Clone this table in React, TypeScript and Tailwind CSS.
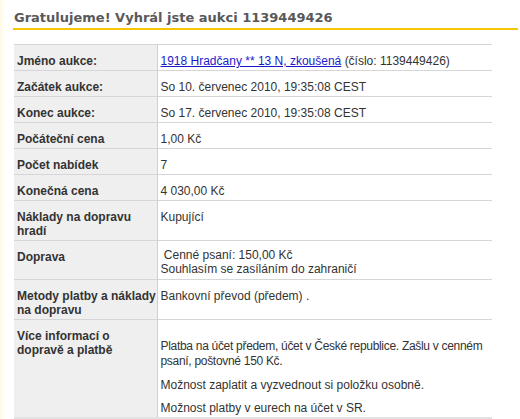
import React from "react";

const labelCls =
  "w-[143px] bg-[#efefef] border-t border-[#d6d6d6] border-r border-r-[#cfcfcf] align-top pl-[3px] pr-[2px] pt-[9px] pb-[2px] font-bold text-[#333] leading-[14px] whitespace-nowrap";
const valCls =
  "border-t border-[#d6d6d6] align-top pl-[3px] pr-[2px] pt-[9px] pb-[2px] text-[#333] leading-[14px] whitespace-nowrap";

function Row({ label, children, valExtra = "" }: { label: React.ReactNode; children: React.ReactNode; valExtra?: string }) {
  return (
    <tr>
      <td className={labelCls}>{label}</td>
      <td className={`${valCls} ${valExtra}`}>{children}</td>
    </tr>
  );
}

export default function App() {
  return (
    <div
      className="w-[520px] h-[419px] bg-white flex overflow-hidden"
      style={{ fontFamily: '"Liberation Sans", Arial, sans-serif' }}
    >
      <div className="w-[3px] bg-[#fffbea] shrink-0" />
      <div className="flex-1 pl-[10px] pt-[10px]">
        <h1
          className="text-[13px] font-bold text-[#595959] leading-[16px] pl-[1px] pb-[2px] mr-[2px] border-b-2 border-[#f7c600]"
          style={{ fontFamily: '"DejaVu Sans", Verdana, sans-serif' }}
        >
          Gratulujeme! Vyhrál jste aukci 1139449426
        </h1>
        <table className="mt-[14px] ml-[1px] w-[478px] table-fixed border-collapse text-[12px] border-b-2 border-[#e2e2e2]">
          <colgroup>
            <col className="w-[143px]" />
            <col />
          </colgroup>
          <tbody>
            <Row label="Jméno aukce:">
              <a href="#" className="text-[#1a1acc] underline">
                1918 Hradčany ** 13 N, zkoušená
              </a>{" "}
              (číslo: 1139449426)
            </Row>
            <Row label="Začátek aukce:">So 10. červenec 2010, 19:35:08 CEST</Row>
            <Row label="Konec aukce:">So 17. červenec 2010, 19:35:08 CEST</Row>
            <Row label="Počáteční cena">1,00 Kč</Row>
            <Row label="Počet nabídek">7</Row>
            <Row label="Konečná cena">4 030,00 Kč</Row>
            <Row label={<>Náklady na dopravu<br />hradí</>}>Kupující</Row>
            <Row label="Doprava">
              <div className="-mt-[2px] pb-[1px]">
                &nbsp;Cenné psaní: 150,00 Kč
                <br />
                Souhlasím se zasíláním do zahraničí
              </div>
            </Row>
            <Row label={<>Metody platby a náklady<br />na dopravu</>}>Bankovní převod (předem) .</Row>
            <Row label={<>Více informací o<br />dopravě a platbě</>} valExtra="pb-0">
              <div className="flex flex-col gap-[9px] pt-[10px]">
                <p className="tracking-[-0.3px] leading-[15px]">
                  Platba na účet předem, účet v České republice. Zašlu v cenném
                  <br />
                  psaní, poštovné 150 Kč.
                </p>
                <p>Možnost zaplatit a vyzvednout si položku osobně.</p>
                <p>Možnost platby v eurech na účet v SR.</p>
              </div>
            </Row>
          </tbody>
        </table>
      </div>
    </div>
  );
}
